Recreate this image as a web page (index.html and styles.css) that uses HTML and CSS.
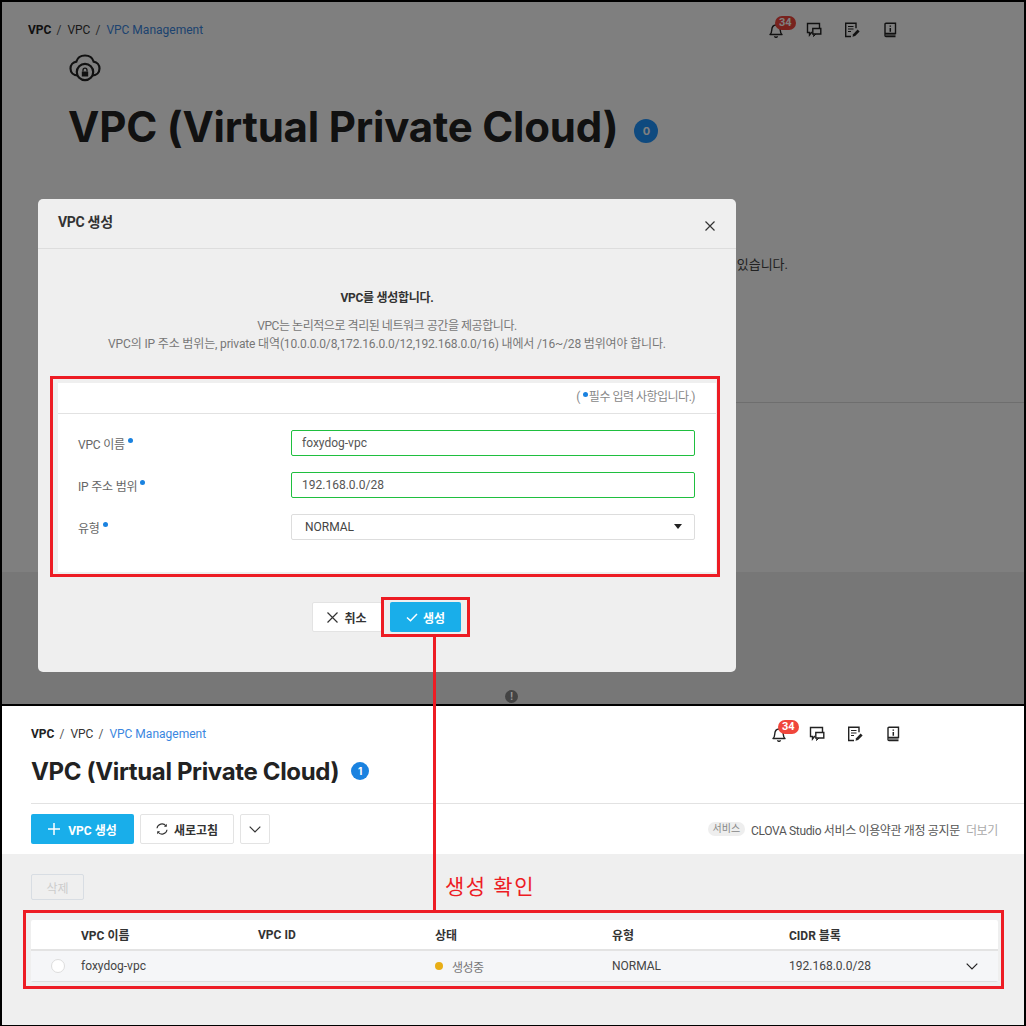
FILE: index.html

```html
<!DOCTYPE html>
<html lang="ko">
<head>
  <meta charset="UTF-8">
  <title>VPC 생성</title>
  <link rel="stylesheet" href="styles.css">
</head>
<body>

<svg class="defs" width="0" height="0">
  <symbol id="i-bell" viewBox="0 0 16 16">
    <path d="M2 12.500c1.200-1 1.600-2 1.700-4C3.800 5 5.500 3 8 3s4.200 2 4.300 5.500c.1 2 .5 3 1.700 4z" fill="none" stroke="currentColor" stroke-width="1.400" stroke-linejoin="round"/>
    <path d="M6.500 14.300a1.600 1.600 0 0 0 3 0" fill="none" stroke="currentColor" stroke-width="1.400"/>
  </symbol>
  <symbol id="i-chat" viewBox="0 0 16 16">
    <path d="M6 10.500H5.500L3.500 13v-2.500h-2v-9h12V6" fill="none" stroke="currentColor" stroke-width="1.400"/>
    <path d="M6.800 6.500h8v5.500h-8z" fill="none" stroke="currentColor" stroke-width="1.400"/>
    <path d="M8 12l-.5 2.500 2.500-2.500" fill="none" stroke="currentColor" stroke-width="1"/>
  </symbol>
  <symbol id="i-note" viewBox="0 0 16 16">
    <path d="M7 14.500H1.700V1.200H12v5" fill="none" stroke="currentColor" stroke-width="1.400"/>
    <path d="M4 4.500h5.500M4 7h5.500M4 9.500h3" fill="none" stroke="currentColor" stroke-width="1.200"/>
    <path d="M8.500 14.800l.6-2.600 4.500-4.700 2 1.900-4.500 4.700z" fill="currentColor"/>
  </symbol>
  <symbol id="i-book" viewBox="0 0 16 16">
    <path d="M3 12V2.200c0-.6.400-1 1-1h9.500v10.300H4c-.6 0-1 .4-1 1.100v.8c0 .7.400 1.100 1 1.100h9.500" fill="none" stroke="currentColor" stroke-width="1.400"/>
    <path d="M8.300 3.500v1.300M8.300 6v3.800" fill="none" stroke="currentColor" stroke-width="1.500"/>
    <path d="M4 13h9.500" fill="none" stroke="currentColor" stroke-width="1"/>
  </symbol>
  <symbol id="i-cloud" viewBox="0 0 32 28">
    <path d="M9 21.500C4.500 21.500 1.500 18.500 1.500 14.500c0-3.500 2.500-6.300 5.800-6.800C8.500 3.700 12 1.500 16 1.500s7.500 2.200 8.700 6.200c3.300.5 5.800 3.300 5.800 6.800 0 4-3 7-7.500 7" fill="none" stroke="currentColor" stroke-width="2.200"/>
    <circle cx="16" cy="18" r="8.200" fill="none" stroke="currentColor" stroke-width="2.200"/>
    <path d="M12.800 17.500h6.400v5h-6.400z" fill="currentColor"/>
    <path d="M14 17.500v-1.300a2 2 0 0 1 4 0v1.300" fill="none" stroke="currentColor" stroke-width="1.300"/>
  </symbol>
</svg>

<div class="sheet">

  <section class="shot shot-top">
    <div class="page-white">
      <div class="topbar">
        <div class="crumbs"><b>VPC</b><i>/</i><span>VPC</span><i>/</i><a>VPC Management</a></div>
        <div class="tools">
          <div class="tool"><svg><use href="#i-bell"/></svg><em class="count">34</em></div>
          <div class="tool"><svg><use href="#i-chat"/></svg></div>
          <div class="tool"><svg><use href="#i-note"/></svg></div>
          <div class="tool"><svg><use href="#i-book"/></svg></div>
        </div>
      </div>
      <div class="hero">
        <svg class="hero-icon"><use href="#i-cloud"/></svg>
        <h1 class="hero-title">VPC (Virtual Private Cloud) <span class="hero-badge">0</span></h1>
      </div>
      <p class="hero-desc">있습니다.</p>
      <div class="hero-rule"></div>
    </div>
    <div class="page-gray"></div>
    <div class="dim"></div>
    <div class="dim-note">!</div>

    <div class="modal">
      <div class="modal-head">
        <h3>VPC 생성</h3>
        <svg class="close" width="10" height="10" viewBox="0 0 10 10"><path d="M.5.5l9 9M9.500.5l-9 9" stroke="#333" stroke-width="1.200"/></svg>
      </div>
      <div class="intro">
        <strong>VPC를 생성합니다.</strong>
        <p><span class="intro-first">VPC는 논리적으로 격리된 네트워크 공간을 제공합니다.</span><br>VPC의 IP 주소 범위는, private 대역(10.0.0.0/8,172.16.0.0/12,192.168.0.0/16) 내에서 /16~/28 범위여야 합니다.</p>
      </div>
      <div class="form-panel">
        <div class="form-note">(<u></u>필수 입력 사항입니다.)</div>
        <div class="form-body">
          <div class="field">
            <label>VPC 이름<u></u></label>
            <div class="input ok">foxydog-vpc</div>
          </div>
          <div class="field">
            <label>IP 주소 범위<u></u></label>
            <div class="input ok">192.168.0.0/28</div>
          </div>
          <div class="field">
            <label>유형<u></u></label>
            <div class="input select">NORMAL<s></s></div>
          </div>
        </div>
      </div>
      <div class="modal-foot">
        <button class="btn btn-cancel">
          <svg width="11" height="11" viewBox="0 0 11 11"><path d="M.5.5l10 10M10.500.5l-10 10" stroke="#333" stroke-width="1.200"/></svg>취소
        </button>
        <button class="btn btn-blue btn-ok">
          <svg width="12" height="9" viewBox="0 0 12 9"><path d="M1 4.500l3.500 3.300L11 1" fill="none" stroke="#fff" stroke-width="1.500"/></svg>생성
        </button>
      </div>
    </div>
  </section>

  <section class="shot shot-bottom">
    <div class="list-head">
      <div class="topbar topbar-b">
        <div class="crumbs"><b>VPC</b><i>/</i><span>VPC</span><i>/</i><a>VPC Management</a></div>
        <div class="tools">
          <div class="tool"><svg><use href="#i-bell"/></svg><em class="count">34</em></div>
          <div class="tool"><svg><use href="#i-chat"/></svg></div>
          <div class="tool"><svg><use href="#i-note"/></svg></div>
          <div class="tool"><svg><use href="#i-book"/></svg></div>
        </div>
      </div>
      <h2 class="list-title">VPC (Virtual Private Cloud) <span class="list-badge">1</span></h2>
      <div class="actions">
        <button class="btn btn-blue btn-add">
          <svg width="12" height="12" viewBox="0 0 12 12"><path d="M6 0v12M0 6h12" stroke="#fff" stroke-width="1.500"/></svg>VPC 생성
        </button>
        <button class="btn btn-refresh">
          <svg width="12" height="12" viewBox="0 0 12 12"><path d="M1 5.300A5 5 0 0 1 10 3M11 6.700A5 5 0 0 1 2 9" fill="none" stroke="#333" stroke-width="1.100"/><path d="M10.800 .8v2.900H7.900zM1.200 11.200V8.300h2.900z" fill="#333"/></svg>새로고침
        </button>
        <button class="btn btn-more">
          <svg width="12" height="7" viewBox="0 0 12 7"><path d="M.7.7L6 6l5.300-5.300" fill="none" stroke="#333" stroke-width="1.200"/></svg>
        </button>
        <div class="notice"><span class="tag">서비스</span>CLOVA Studio 서비스 이용약관 개정 공지문<a>더보기</a></div>
      </div>
    </div>
    <div class="list-body">
      <button class="btn btn-delete">삭제</button>
      <div class="table">
        <div class="tr th">
          <div></div><div>VPC 이름</div><div>VPC ID</div><div>상태</div><div>유형</div><div>CIDR 블록</div><div></div>
        </div>
        <div class="tr td">
          <div><span class="radio"></span></div>
          <div>foxydog-vpc</div>
          <div></div>
          <div class="status"><span class="dot"></span>생성중</div>
          <div>NORMAL</div>
          <div>192.168.0.0/28</div>
          <div class="row-open"><svg width="12" height="7" viewBox="0 0 12 7"><path d="M.7.7L6 6l5.300-5.300" fill="none" stroke="#222" stroke-width="1.200"/></svg></div>
        </div>
      </div>
    </div>
  </section>

  <!-- red annotations drawn over the two screenshots -->
  <div class="mark mark-form"></div>
  <div class="mark mark-btn"></div>
  <div class="mark mark-line"></div>
  <div class="mark mark-table"></div>
  <div class="mark-text">생성 확인</div>
</div>

</body>
</html>
```

FILE: styles.css

```css
* { box-sizing: border-box; }
body { margin: 0; font-family: Roboto, "Noto Sans CJK KR", sans-serif; font-size: 12px; color: #222; background: #fff; }
.defs { position: absolute; }
.sheet { position: relative; width: 1026px; height: 1026px; display: flex; flex-direction: column; overflow: hidden; }
button { font-family: inherit; }

.shot { border: solid #000; border-width: 2px 2px 1px; }
.shot-top { position: relative; height: 705px; display: flex; flex-direction: column; overflow: hidden; }
.shot-bottom { height: 321px; border-top-width: 1px; display: flex; flex-direction: column; }

/* header row, used by both screenshots */
.topbar { display: flex; justify-content: space-between; align-items: center; height: 16px; margin-top: 20px; padding: 0 126px 0 26px; }
.topbar-b { padding: 0 123px 0 29px; }
.crumbs { display: flex; align-items: center; color: #333; }
.crumbs b { font-weight: 700; color: #222; }
.crumbs i { font-style: normal; color: #555; margin: 0 6px 0 5px; }
.crumbs a { color: #3a86e0; }
.tools { display: flex; gap: 22px; }
.tool { position: relative; width: 16px; height: 16px; color: #222; }
.tool svg { display: block; width: 16px; height: 16px; }
.count { position: absolute; left: 7px; top: -6px; min-width: 20px; height: 14px; padding: 0 4px; border-radius: 7px; background: #f0463c; color: #fff; font-style: normal; font-weight: 700; font-size: 11px; line-height: 14px; text-align: center; }

/* page behind the modal */
.page-white { height: 570px; background: #fff; }
.page-gray { flex: 1; background: #efefef; }
.hero { padding: 16px 0 0 67px; }
.hero-icon { display: block; width: 32px; height: 28px; color: #222; }
.hero-title { display: flex; align-items: center; gap: 16px; margin: 9px 0 0 -1px; font-family: Inter, sans-serif; font-weight: 700; font-size: 42px; letter-spacing: -.2px; line-height: 72px; color: #222; white-space: nowrap; }
.hero-badge { width: 24px; height: 24px; margin-top: 8px; border-radius: 50%; background: #1f94ff; color: #fff; font-size: 11px; letter-spacing: 0; line-height: 24px; text-align: center; }
.hero-desc { margin: 91px 236px 0 0; text-align: right; color: #444; font-size: 13px; }
.hero-rule { height: 1px; margin: 129px 0 0 300px; background: #ddd; }
.dim { position: absolute; inset: 0; background: rgba(0, 0, 0, .5); }
.dim-note { position: absolute; left: 503px; top: 688px; width: 13px; height: 13px; border-radius: 50%; background: #444; color: #999; font-size: 10px; font-weight: 700; line-height: 13px; text-align: center; }

/* modal */
.modal { position: absolute; left: 36px; top: 197px; width: 698px; height: 473px; background: #efefef; border-radius: 5px; display: flex; flex-direction: column; }
.modal-head { display: flex; justify-content: space-between; align-items: center; height: 50px; padding: 0 21px 0 20px; border-bottom: 1px solid #ddd; }
.modal-head h3 { margin: 0 0 5px; font-size: 14px; font-weight: 700; color: #333; letter-spacing: -.3px; }
.close { margin-top: 4px; }
.intro { padding-top: 41px; text-align: center; }
.intro strong { display: block; line-height: 16px; color: #333; letter-spacing: -.3px; }
.intro p { margin: 11px 0 0; line-height: 18px; color: #777; letter-spacing: -.15px; }
.intro-first { letter-spacing: -.45px; }
.form-panel { margin: 30px 20px 0; height: 189px; background: #fff; }
.form-note { height: 31px; padding-right: 21px; border-bottom: 1px solid #e2e2e2; text-align: right; line-height: 29px; color: #888; letter-spacing: -.5px; }
.form-note u { display: inline-block; width: 5px; height: 5px; margin: 0 1px 4px 3px; border-radius: 50%; background: #1a82e0; }
.form-body { display: flex; flex-direction: column; gap: 16px; padding: 16px 21px 0 20px; }
.field { display: grid; grid-template-columns: 213px 1fr; align-items: center; }
.field label { color: #666; letter-spacing: -.2px; }
.field label u { display: inline-block; width: 5px; height: 5px; margin: 0 0 6px 3px; border-radius: 50%; background: #1a82e0; }
.input { position: relative; height: 26px; padding: 0 10px; border: 1px solid #ddd; border-radius: 2px; background: #fff; line-height: 24px; color: #555; }
.input.ok { border-color: #1fbf3f; }
.input.select { padding-left: 13px; color: #444; }
.input.select s { position: absolute; right: 12px; top: 9px; border: 4px solid transparent; border-top: 5px solid #222; border-bottom: 0; }
.modal-foot { display: flex; justify-content: center; gap: 8px; padding: 30px 1px 0 0; }

/* buttons */
.btn { display: flex; align-items: center; justify-content: center; gap: 6px; height: 30px; padding: 0; border: 1px solid #e3e3e3; border-radius: 2px; background: #fff; font-size: 12px; font-weight: 700; color: #333; }
.btn-blue { border: 0; background: #19aeea; color: #fff; }
.btn-cancel { width: 70px; }
.btn-ok { width: 71px; gap: 5px; }
.btn-add { width: 103px; gap: 8px; }
.btn-refresh { width: 94px; }
.btn-more { width: 30px; }
.btn-delete { width: 53px; height: 26px; margin-bottom: 20px; border-color: #d8dde3; background: transparent; color: #ccc; font-weight: 400; }

/* list screen */
.list-head { background: #fff; height: 148px; }
.list-title { display: flex; align-items: center; gap: 12px; margin: 9px 0 0 29px; height: 52px; padding-bottom: 12px; font-family: Inter, sans-serif; font-weight: 700; font-size: 24px; letter-spacing: -.35px; color: #222; white-space: nowrap; }
.list-badge { width: 18px; height: 18px; border-radius: 50%; background: #1a82e0; color: #fff; font-size: 10px; letter-spacing: 0; line-height: 18px; text-align: center; }
.actions { display: flex; gap: 6px; margin-left: 29px; padding-top: 10px; border-top: 1px solid #e2e2e2; }
.notice { display: flex; align-items: center; margin-left: auto; padding-right: 26px; color: #555; letter-spacing: -.35px; }
.tag { height: 14px; margin-right: 6px; padding: 0 5px; border-radius: 7px; background: #eee; color: #888; font-size: 10px; line-height: 14px; letter-spacing: 0; }
.notice a { margin-left: 6px; color: #aaa; }
.list-body { flex: 1; background: #efefef; padding: 20px 26px 0 29px; }
.table { background: #fff; border-radius: 2px; box-shadow: 0 1px 0 #ddd; }
.tr { display: grid; grid-template-columns: 50px 177px 177px 177px 177px 1fr 37px; align-items: center; }
.th { height: 31px; border-bottom: 2px solid #e3e3e3; font-weight: 700; color: #333; }
.td { height: 30px; background: #f5f6f8; color: #444; }
.radio { display: block; width: 14px; height: 14px; margin-left: 20px; border: 1px solid #ddd; border-radius: 50%; background: #fff; }
.status { display: flex; align-items: center; gap: 9px; color: #777; letter-spacing: -.6px; }
.dot { width: 8px; height: 8px; border-radius: 50%; background: #e8ae16; }
.row-open { padding-left: 5px; line-height: 0; }

/* annotations */
.mark { position: absolute; border: 3px solid #ed1c24; }
.mark-form { left: 50px; top: 376px; width: 670px; height: 201px; }
.mark-btn { left: 381px; top: 597px; width: 89px; height: 40px; }
.mark-line { left: 433px; top: 637px; width: 3px; height: 274px; border-width: 0 0 0 3px; }
.mark-table { left: 23px; top: 910px; width: 981px; height: 79px; }
.mark-text { position: absolute; left: 445px; top: 873px; font-size: 21px; letter-spacing: 1.500px; line-height: 28px; color: #ed1c24; }
```
